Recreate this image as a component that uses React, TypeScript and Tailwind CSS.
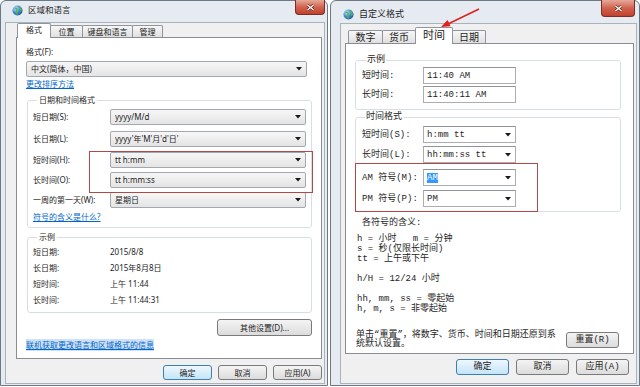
import React from 'react'

const L = "font-[family-name:'Noto_Sans','Noto_Sans_CJK_SC',sans-serif]"
const R = "font-[family-name:'Liberation_Mono','Noto_Sans_CJK_SC',monospace]"

function Globe() {
  return (
    <svg width="11" height="11" viewBox="0 0 12 12">
      <defs>
        <radialGradient id="g" cx="0.35" cy="0.3" r="0.8">
          <stop offset="0" stopColor="#bfe6ff" />
          <stop offset="0.5" stopColor="#3f8fd6" />
          <stop offset="1" stopColor="#1b4f8f" />
        </radialGradient>
      </defs>
      <circle cx="6" cy="6" r="5.5" fill="url(#g)" />
      <path d="M3 4c1-1 2 0 2.5 1s-1 2-.5 3 1 1.5.5 2.5M7.5 2c.5 1 1.5 1 2 2s-.5 2 .5 3" stroke="#5db347" strokeWidth="1.6" fill="none" />
    </svg>
  )
}

function CloseBtn({ className = '' }: { className?: string }) {
  return (
    <div className={`flex items-center justify-center rounded-b-[4px] border border-t-0 border-[#7b2e25] bg-gradient-to-b from-[#e6a999] via-[#d0634f] to-[#c0402c] ${className}`}>
      <svg width="9" height="7" viewBox="0 0 9 7">
        <path d="M1.5 1l6 5M7.5 1l-6 5" stroke="#5a1f17" strokeWidth="2.6" />
        <path d="M1.5 1l6 5M7.5 1l-6 5" stroke="#ffffff" strokeWidth="1.4" />
      </svg>
    </div>
  )
}

function Tab({ label, active, className = '' }: { label: string; active?: boolean; className?: string }) {
  return (
    <div
      className={`flex items-center justify-center border border-b-0 border-[#8e959e] rounded-t-[2px] ${
        active ? 'relative z-10 bg-white -mb-px' : 'bg-gradient-to-b from-[#f7f7f7] to-[#e0e0e0] -ml-px'
      } ${className}`}
    >
      {label}
    </div>
  )
}

function Arrow() {
  return (
    <svg width="6" height="4" viewBox="0 0 6 4" className="shrink-0">
      <path d="M0 0h6L3 3.5z" fill="#1a1a1a" />
    </svg>
  )
}

function Combo({ text, className = '' }: { text: React.ReactNode; className?: string }) {
  return (
    <div className={`flex items-center h-[16px] border border-[#a2a8b0] rounded-[2px] bg-gradient-to-b from-[#f7f7f7] to-[#e4e4e4] pl-[4px] pr-[4px] ${className}`}>
      <span className="flex-1 truncate">{text}</span>
      <Arrow />
    </div>
  )
}

function EditCombo({ text, className = '' }: { text: React.ReactNode; className?: string }) {
  return (
    <div className={`flex items-center h-[17px] w-[93px] border border-[#abadb3] border-t-[#8f949b] bg-white pl-[3px] pr-[4px] ${className}`}>
      <span className="flex-1 truncate">{text}</span>
      <Arrow />
    </div>
  )
}

function Btn({ label, primary, className = '' }: { label: string; primary?: boolean; className?: string }) {
  return (
    <div
      className={`flex items-center justify-center border rounded-[3px] ${
        primary
          ? 'border-[#3c7fb1] bg-gradient-to-b from-[#eef7fd] to-[#c4e5f8]'
          : 'border-[#7a7a7a] bg-gradient-to-b from-[#f4f4f4] to-[#dcdcdc]'
      } ${className}`}
    >
      {label}
    </div>
  )
}

function LeftDialog() {
  const rows = [
    { label: '短日期(S):', value: 'yyyy/M/d', mt: 'mt-[3px]' },
    { label: '长日期(L):', value: "yyyy'年'M'月'd'日'", mt: 'mt-[6px]' },
    { label: '短时间(H):', value: 'tt h:mm', mt: 'mt-[5px]' },
    { label: '长时间(O):', value: 'tt h:mm:ss', mt: 'mt-[4px]' },
    { label: '一周的第一天(W):', value: '星期日', mt: 'mt-[4px]' },
  ]
  const samples = [
    ['短日期:', '2015/8/8'],
    ['长日期:', '2015年8月8日'],
    ['短时间:', '上午 11:44'],
    ['长时间:', '上午 11:44:31'],
  ]
  return (
    <div className={`w-[328px] h-[386px] shrink-0 flex flex-col border border-[#6d7885] rounded-t-[6px] bg-[#e6ebf1] pl-[4px] pr-[2px] pb-[1px] text-[8px] leading-[12px] text-[#1e1e1e] ${L}`}>
      <div className="h-[21px] flex items-start justify-between">
        <div className="flex items-center gap-[5px] pl-[7px] pt-[3px]">
          <Globe />
          <span className="text-[8.5px]">区域和语言</span>
        </div>
        <CloseBtn className="w-[30px] h-[15px] -mt-px" />
      </div>
      <div className="flex-1 flex flex-col bg-[#f0f0f0] border border-[#a9b3be] pl-[10px] pr-[2px]">
        <div className="h-[14px] flex items-end pl-[1px]">
          <Tab label="格式" active className="w-[34px] h-[15px] pb-[2px]" />
          <Tab label="位置" className="w-[33px] h-[12px]" />
          <Tab label="键盘和语言" className="w-[51px] h-[12px]" />
          <Tab label="管理" className="w-[31px] h-[12px]" />
        </div>
        <div className="h-[322px] border border-[#898c95] bg-white flex flex-col">
          <div className="pt-[8px] pl-[9px] h-[20px]">格式(F):</div>
          <Combo text="中文(简体，中国)" className="mt-[3px] ml-[9px] w-[281px]" />
          <div className="mt-[1px] ml-[9px] text-[#0066cc] underline">更改排序方法</div>
          <fieldset className="mt-[4px] ml-[10px] w-[285px] border border-[#d5dfe5] rounded-[3px] pl-[5px] pb-[4px]">
            <legend className="ml-[4px] px-[2px]">日期和时间格式</legend>
            {rows.map((r) => (
              <div key={r.label} className={`flex items-center ${r.mt}`}>
                <span className="w-[77px]">{r.label}</span>
                <Combo text={r.value} className="w-[196px]" />
              </div>
            ))}
            <div className="mt-[3px] text-[#0066cc] underline">符号的含义是什么?</div>
          </fieldset>
          <fieldset className="mt-[3px] ml-[10px] w-[285px] border border-[#d5dfe5] rounded-[3px] pl-[5px] pb-[4px]">
            <legend className="ml-[4px] px-[2px]">示例</legend>
            <div className="mt-[1px]">
              {samples.map(([k, v]) => (
                <div key={k} className="flex items-center h-[16px]">
                  <span className="w-[77px]">{k}</span>
                  <span>{v}</span>
                </div>
              ))}
            </div>
          </fieldset>
          <Btn label="其他设置(D)..." className="mt-[6px] self-end mr-[9px] w-[95px] h-[17px]" />
          <div className="mt-[3px] ml-[9px] self-start text-[#0066cc] underline bg-[#cfe1f6]">联机获取更改语言和区域格式的信息</div>
        </div>
        <div className="mt-[6px] flex justify-end gap-[6px]">
          <Btn label="确定" primary className="w-[49px] h-[15px]" />
          <Btn label="取消" className="w-[49px] h-[15px]" />
          <Btn label="应用(A)" className="w-[49px] h-[15px]" />
        </div>
      </div>
    </div>
  )
}

function RightDialog() {
  return (
    <div className={`w-[310px] h-[386px] shrink-0 flex flex-col border border-[#6d7885] rounded-t-[6px] bg-[#e6ebf1] pl-[9px] pr-[2px] pb-[1px] text-[9px] leading-[12px] text-[#1e1e1e] ${R}`}>
      <div className="h-[22px] flex items-start justify-between">
        <div className="flex items-center gap-[5px] pl-[3px] pt-[7px]">
          <Globe />
          <span className={`text-[9px] ${L}`}>自定义格式</span>
        </div>
        <CloseBtn className="w-[34px] h-[17px] -mt-px mr-[2px]" />
      </div>
      <div className="flex-1 flex flex-col bg-[#f0f0f0] border border-[#a9b3be] pl-[4px] pr-[2px]">
        <div className={`mt-[3px] h-[16px] flex items-end pl-[2px] text-[10px] ${L}`}>
          <Tab label="数字" className="w-[35px] h-[13px] ml-px" />
          <Tab label="货币" className="w-[34px] h-[13px]" />
          <Tab label="时间" active className="w-[38px] h-[17px] -ml-px pb-[2px] text-[11px]" />
          <Tab label="日期" className="w-[34px] h-[13px]" />
        </div>
        <div className="h-[311px] border border-[#898c95] bg-white flex flex-col">
          <fieldset className="mt-[10px] ml-[9px] w-[266px] border border-[#d5dfe5] rounded-[3px] pl-[6px] pb-[6px]">
            <legend className="ml-[4px] px-[1px]">示例</legend>
            <div className="mt-[1px] flex items-center">
              <span className="w-[61px]">短时间:</span>
              <div className="w-[93px] h-[17px] border border-[#abadb3] border-t-[#8f949b] bg-white pl-[3px] flex items-center">11:40 AM</div>
            </div>
            <div className="mt-[2px] flex items-center">
              <span className="w-[61px]">长时间:</span>
              <div className="w-[93px] h-[17px] border border-[#abadb3] border-t-[#8f949b] bg-white pl-[3px] flex items-center">11:40:11 AM</div>
            </div>
          </fieldset>
          <fieldset className="mt-[1px] ml-[9px] w-[266px] border border-[#d5dfe5] rounded-[3px] pl-[6px] pb-[4px]">
            <legend className="ml-[3px] px-[1px]">时间格式</legend>
            <div className="mt-[3px] flex items-center">
              <span className="w-[61px]">短时间(S):</span>
              <EditCombo text="h:mm tt" />
            </div>
            <div className="mt-[3px] flex items-center">
              <span className="w-[61px]">长时间(L):</span>
              <EditCombo text="hh:mm:ss tt" />
            </div>
            <div className="mt-[6px] flex items-center">
              <span className="w-[61px]">AM 符号(M):</span>
              <EditCombo text={<span className="bg-[#3399ff] text-white">AM</span>} />
            </div>
            <div className="mt-[4px] flex items-center">
              <span className="w-[61px]">PM 符号(P):</span>
              <EditCombo text="PM" />
            </div>
          </fieldset>
          <div className="mt-[5px] ml-[16px]">各符号的含义:</div>
          <div className="mt-[5px] ml-[11px] leading-[10px] whitespace-pre">
            <div>h = 小时   m = 分钟</div>
            <div>s = 秒(仅限长时间)</div>
            <div>tt = 上午或下午</div>
            <div className="h-[10px]" />
            <div>h/H = 12/24 小时</div>
            <div className="h-[10px]" />
            <div>hh, mm, ss = 零起始</div>
            <div>h, m, s = 非零起始</div>
          </div>
          <div className="mt-auto pb-[4px] flex items-center">
            <div className="ml-[10px] w-[209px] leading-[9px]">
              单击“重置”，将数字、货币、时间和日期还原到系
              <br />
              统默认设置。
            </div>
            <Btn label="重置(R)" className="ml-[1px] w-[53px] h-[16px]" />
          </div>
        </div>
        <div className="mt-[5px] flex justify-end gap-[7px] pr-[5px]">
          <Btn label="确定" primary className="w-[53px] h-[16px]" />
          <Btn label="取消" className="w-[53px] h-[16px]" />
          <Btn label="应用(A)" className="w-[53px] h-[16px]" />
        </div>
      </div>
    </div>
  )
}

export default function App() {
  return (
    <div className="relative w-[640px] h-[387px] bg-white overflow-hidden flex items-start">
      <LeftDialog />
      <div className="w-[2px] shrink-0" />
      <RightDialog />
      <div className="absolute z-20 left-[89px] top-[151px] w-[224px] h-[42px] border border-[#b04a48]" />
      <div className="absolute z-20 left-[355px] top-[163px] w-[183px] h-[49px] border border-[#b04a48]" />
      <svg className="absolute z-20 left-[436px] top-[4px]" width="50" height="26" viewBox="0 0 50 26">
        <path d="M43 5L12 20" stroke="#e0201c" strokeWidth="1.5" />
        <path d="M5 23L14.6 22.2L11.6 15.9Z" fill="#e0201c" />
      </svg>
    </div>
  )
}
